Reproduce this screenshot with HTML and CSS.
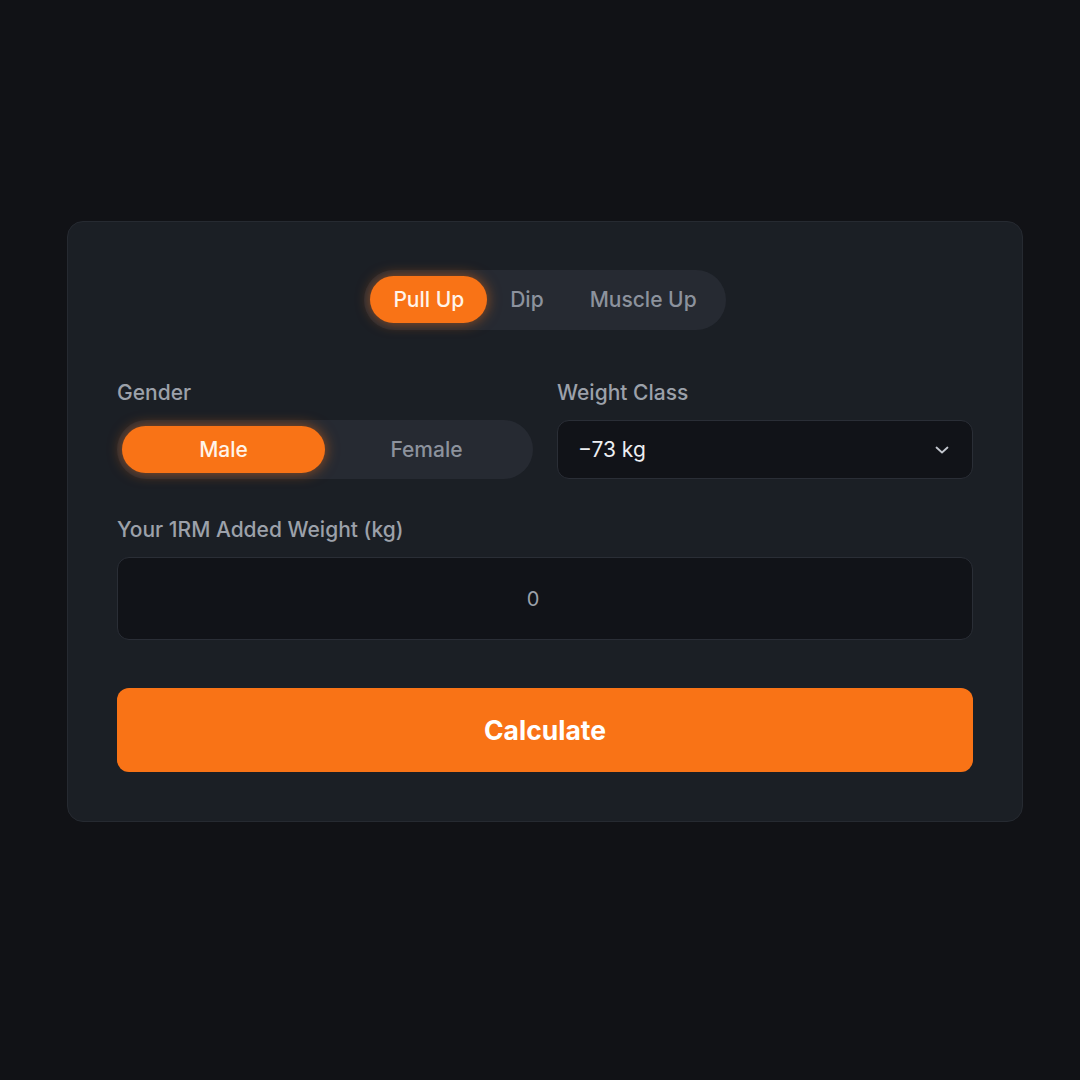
FILE: index.html
```html
<!DOCTYPE html>
<html lang="en">
<head>
<meta charset="utf-8">
<title>1RM Calculator</title>
<link rel="stylesheet" href="styles.css">
</head>
<body>
<main class="page">
  <section class="card">
    <div class="tabs-wrap">
      <div class="tabs">
        <button class="tab active">Pull Up</button>
        <button class="tab">Dip</button>
        <button class="tab">Muscle Up</button>
      </div>
    </div>
    <div class="row">
      <div class="field">
        <label class="label">Gender</label>
        <div class="toggle">
          <button class="toggle-btn active">Male</button>
          <button class="toggle-btn">Female</button>
        </div>
      </div>
      <div class="field">
        <label class="label">Weight Class</label>
        <div class="select">
          <span class="select-value">−73 kg</span>
          <svg class="chevron" width="14" height="8" viewBox="0 0 14 8" fill="none"><path d="M1.5 1.5 7 6.5 12.5 1.5" stroke="#c4c8cf" stroke-width="1.8" stroke-linecap="round" stroke-linejoin="round"/></svg>
        </div>
      </div>
    </div>
    <div class="field">
      <label class="label">Your 1RM Added Weight (kg)</label>
      <div class="input"><span class="input-value">0</span></div>
    </div>
    <button class="calc">Calculate</button>
  </section>
</main>
</body>
</html>
```
FILE: styles.css
```css
* { box-sizing: border-box; }
html, body { margin: 0; padding: 0; }
body {
  background: #111216;
  font-family: Inter, "Noto Sans", sans-serif;
  width: 1080px;
  height: 1080px;
}
.page {
  padding: 221px 58px 0 67px;
}
.card {
  width: 956px;
  height: 601px;
  background: #1b1f25;
  border: 1px solid #262a31;
  border-radius: 16px;
  padding: 48px 49px 49px 49px;
  display: flex;
  flex-direction: column;
}
button {
  font-family: inherit;
  border: none;
  cursor: pointer;
}
.tabs-wrap {
  display: flex;
  justify-content: center;
}
.tabs {
  display: flex;
  background: #262a32;
  border-radius: 30px;
  padding: 6px;
  height: 60px;
}
.tab {
  background: transparent;
  color: #8c929d;
  font-size: 21px;
  font-weight: 500;
  padding: 0 23px;
  height: 47px;
  border-radius: 24px;
}
.tab.active,
.toggle-btn.active {
  background: #f97316;
  color: #fff4ea;
  box-shadow: 0 0 14px rgba(249, 115, 22, 0.55);
}
.row {
  display: grid;
  grid-template-columns: 1fr 1fr;
  gap: 24px;
  margin-top: 51px;
}
.field {
  display: flex;
  flex-direction: column;
}
.row + .field {
  margin-top: 39px;
}
.label {
  color: #9ca1aa;
  font-size: 21px;
  font-weight: 500;
  line-height: 24px;
  margin-bottom: 15px;
}
.toggle {
  display: grid;
  grid-template-columns: 1fr 1fr;
  background: #262a32;
  border-radius: 30px;
  padding: 6px 5px;
  height: 59px;
}
.toggle-btn {
  background: transparent;
  color: #8c929d;
  font-size: 21px;
  font-weight: 500;
  height: 47px;
  border-radius: 24px;
}
.select {
  height: 59px;
  background: #111318;
  border: 1px solid #2a2e36;
  border-radius: 12px;
  display: flex;
  align-items: center;
  justify-content: space-between;
  padding: 0 23px 0 20px;
}
.select-value {
  color: #eceef1;
  font-size: 21px;
}
.input {
  height: 83px;
  background: #111318;
  border: 1px solid #2a2e36;
  border-radius: 12px;
  display: flex;
  align-items: center;
  justify-content: center;
  padding-right: 24px;
}
.input-value {
  color: #9ca1aa;
  font-size: 20px;
}
.calc {
  margin-top: 48px;
  height: 84px;
  background: #f97316;
  color: #ffffff;
  font-size: 26.5px;
  font-weight: 700;
  border-radius: 12px;
}
```
